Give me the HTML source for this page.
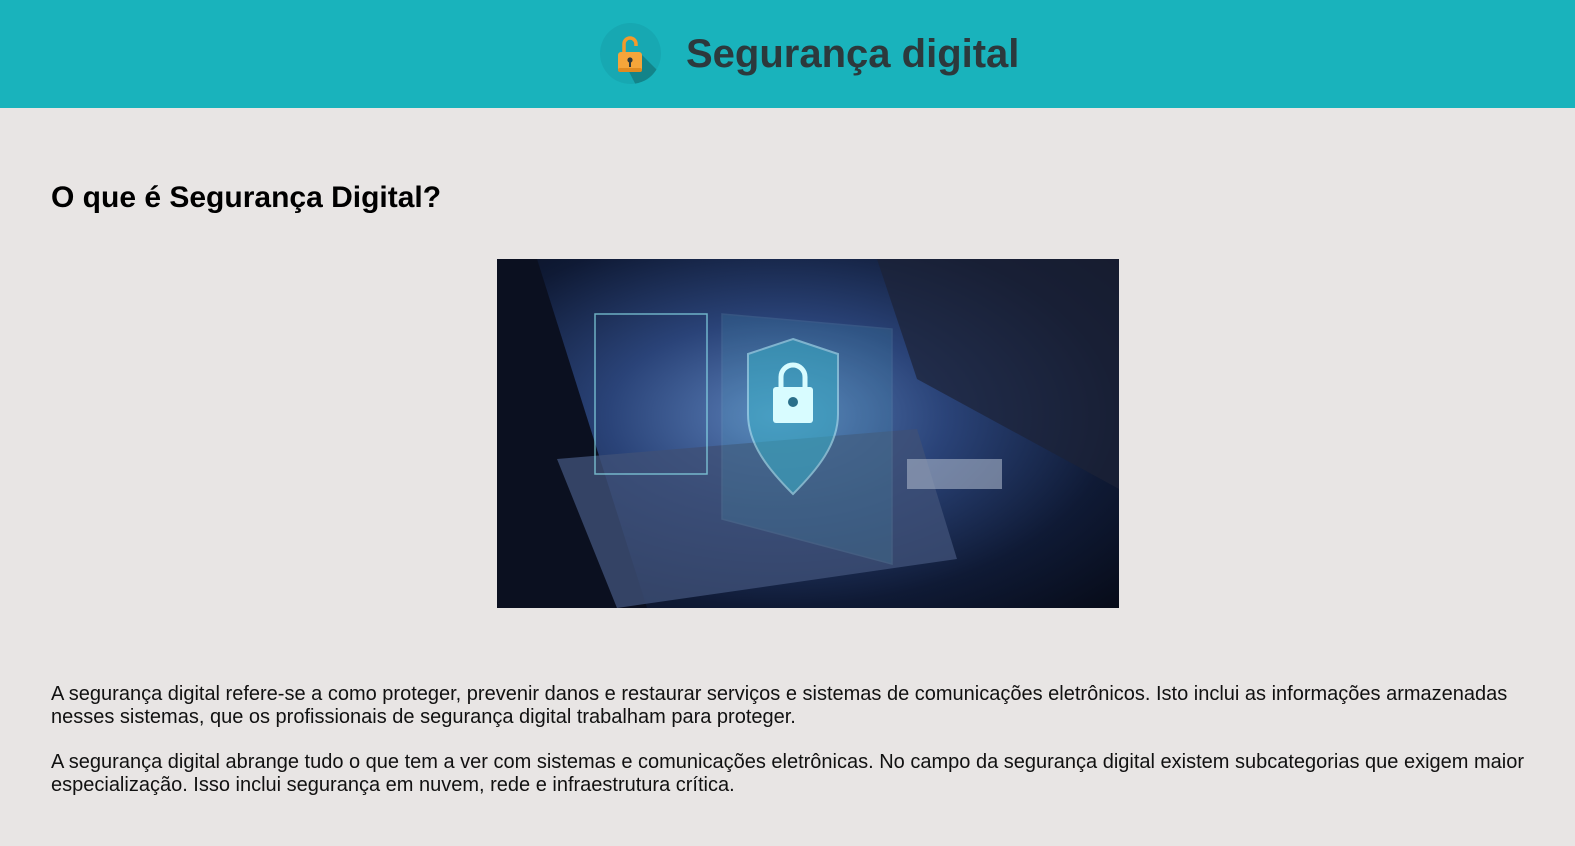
<!DOCTYPE html>
<html><head><meta charset="utf-8"><style>
body{margin:0;background:#e8e5e4;font-family:"Liberation Sans",Arial,sans-serif;width:1575px;height:846px;overflow:hidden}
header{height:108px;background:#19b3bc;position:relative}
.icon{position:absolute;left:600px;top:23px;width:61px;height:61px;border-radius:50%;background:#17a8b2;overflow:hidden}
h1{position:absolute;left:686px;top:32px;margin:0;font-size:40px;font-weight:bold;color:#2c393c}
h2{position:absolute;left:51px;top:181px;margin:0;font-size:30px;font-weight:bold;color:#000}
.img{position:absolute;left:497px;top:259px;width:622px;height:349px;background:radial-gradient(ellipse at 45% 45%,#5a7fb8 0%,#2a4378 35%,#0f1a35 70%,#070b18 100%);overflow:hidden}
p{position:absolute;left:51px;margin:0;font-size:20px;line-height:23px;color:#111;width:1490px}
</style></head><body>
<header>
<div class="icon"><svg width="61" height="61" viewBox="0 0 61 61">
<polygon points="22,35 40,30 70,60 40,70" fill="#137a80" opacity="0.8"/>
<path d="M24 30 V21 a6 6 0 0 1 12 0 V23" fill="none" stroke="#f39a2b" stroke-width="3.5"/>
<rect x="18" y="29" width="24" height="20" rx="3" fill="#f5a53a"/>
<rect x="18" y="45" width="24" height="4" rx="2" fill="#e08a20"/>
<circle cx="30" cy="37" r="2.6" fill="#2c393c"/><rect x="29" y="38" width="2" height="6" fill="#2c393c"/>
</svg></div>
<h1>Segurança digital</h1>
</header>
<h2>O que é Segurança Digital?</h2>
<div class="img"><svg width="622" height="349" viewBox="0 0 622 349">
<polygon points="0,0 40,0 150,349 0,349" fill="#0b1020"/>
<polygon points="60,200 420,170 460,300 120,349" fill="#3e5077" opacity="0.8"/>
<rect x="98" y="55" width="112" height="160" fill="none" stroke="#8fe6f0" stroke-width="1.5" opacity="0.7"/>
<polygon points="225,55 395,70 395,305 225,260" fill="#5fd8e6" opacity="0.12" stroke="#a0f0f8" stroke-width="1.5"/>
<path d="M296 80 l45 15 v60 c0 30-20 55-45 80 c-25-25-45-50-45-80 v-60z" fill="#3ab0c8" opacity="0.55" stroke="#b8f6ff" stroke-width="2"/>
<path d="M284 130 v-12 a12 12 0 0 1 24 0 v12" fill="none" stroke="#d8fcff" stroke-width="5"/>
<rect x="276" y="128" width="40" height="36" rx="3" fill="#d8fcff"/>
<circle cx="296" cy="143" r="5" fill="#2a6f8a"/>
<rect x="410" y="200" width="95" height="30" fill="#a8b4c8" opacity="0.6"/>
<polygon points="380,0 622,0 622,230 420,120" fill="#1d2236" opacity="0.7"/>
</svg></div>
<p style="top:683px">A segurança digital refere-se a como proteger, prevenir danos e restaurar serviços e sistemas de comunicações eletrônicos. Isto inclui as informações armazenadas nesses sistemas, que os profissionais de segurança digital trabalham para proteger.</p>
<p style="top:751px">A segurança digital abrange tudo o que tem a ver com sistemas e comunicações eletrônicas. No campo da segurança digital existem subcategorias que exigem maior especialização. Isso inclui segurança em nuvem, rede e infraestrutura crítica.</p>
</body></html>
